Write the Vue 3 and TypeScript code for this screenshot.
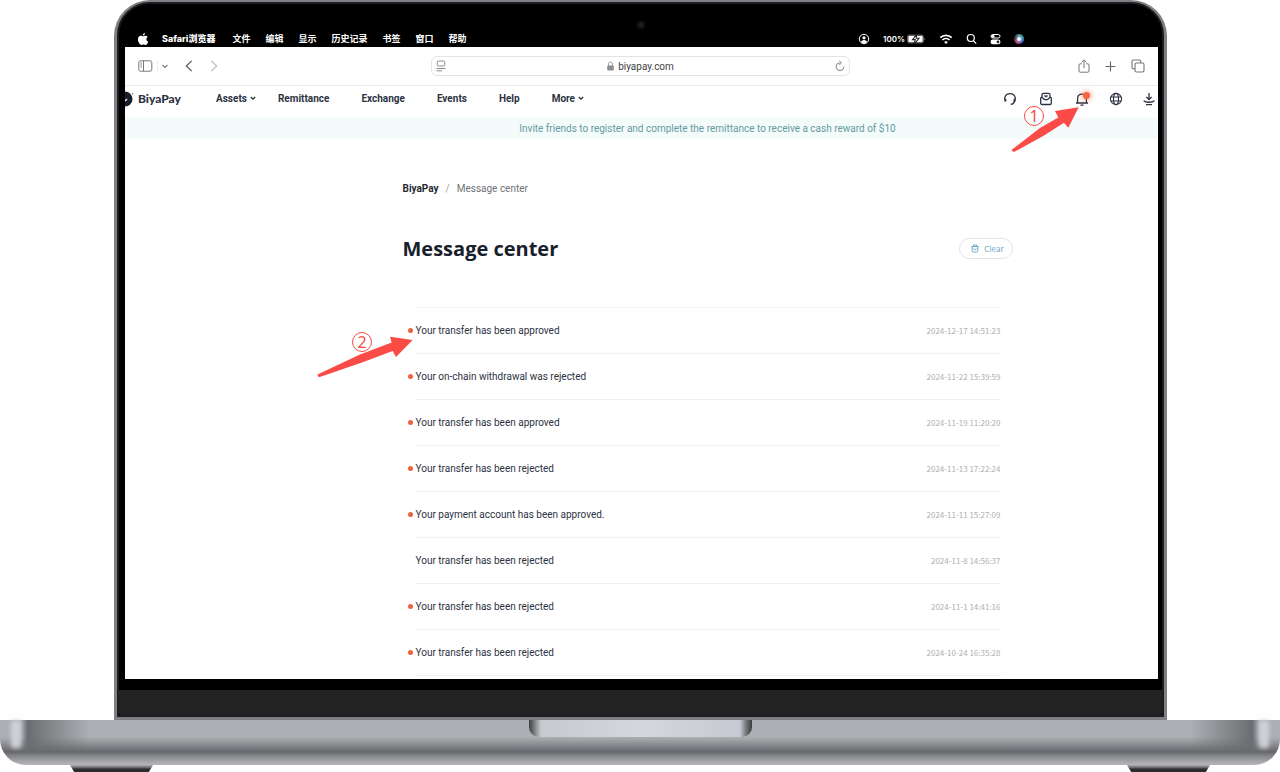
<script setup lang="ts">
interface Message {
  title: string
  time: string
  unread: boolean
}

interface NavItem {
  label: string
  menu?: boolean
}

const systemMenus: string[] = ['文件', '编辑', '显示', '历史记录', '书签', '窗口', '帮助']

const navItems: NavItem[] = [
  { label: 'Assets', menu: true },
  { label: 'Remittance' },
  { label: 'Exchange' },
  { label: 'Events' },
  { label: 'Help' },
  { label: 'More', menu: true },
]

const messages: Message[] = [
  { title: 'Your transfer has been approved', time: '2024-12-17 14:51:23', unread: true },
  { title: 'Your on-chain withdrawal was rejected', time: '2024-11-22 15:39:59', unread: true },
  { title: 'Your transfer has been approved', time: '2024-11-19 11:20:20', unread: true },
  { title: 'Your transfer has been rejected', time: '2024-11-13 17:22:24', unread: true },
  { title: 'Your payment account has been approved.', time: '2024-11-11 15:27:09', unread: true },
  { title: 'Your transfer has been rejected', time: '2024-11-8 14:56:37', unread: false },
  { title: 'Your transfer has been rejected', time: '2024-11-1 14:41:16', unread: true },
  { title: 'Your transfer has been rejected', time: '2024-10-24 16:35:28', unread: true },
]
</script>

<template>
  <div class="laptop">
    <div class="lid">
      <div class="bezel">
        <span class="camera"></span>
        <div class="system-bar">
          <div class="system-left">
            <svg class="apple" width="12" height="14" viewBox="0 0 12 14" fill="#fff" aria-hidden="true">
              <path d="M8 1C8 2.300 7 3.400 5.800 3.400 5.700 2.200 6.700 1.100 8 1zM8.200 3.700c.8 0 1.900.4 2.500 1.300-2 1.200-1.600 3.900.5 4.700C10.600 11.300 9.600 13 8.500 13c-.8 0-1.200-.5-2.100-.5S5.100 13 4.400 13C2.900 13 .9 10 .9 7.300.9 5 2.300 3.700 3.900 3.700c.9 0 1.700.6 2.300.6s1.200-.6 2-.6z" />
            </svg>
            <strong class="app-name">Safari浏览器</strong>
            <span v-for="menu in systemMenus" :key="menu">{{ menu }}</span>
          </div>
          <div class="system-right">
            <svg width="12" height="12" viewBox="0 0 12 12" fill="none" stroke="#fff" aria-hidden="true">
              <circle cx="6" cy="6" r="4.700" />
              <circle cx="6" cy="4.800" r="1.600" fill="#fff" stroke="none" />
              <path d="M2.900 9c.8-2.800 5.400-2.800 6.200 0-1.400 1.700-4.800 1.700-6.200 0z" fill="#fff" stroke="none" />
            </svg>
            <span class="battery">100%
              <svg width="19" height="10" viewBox="0 0 19 10" aria-hidden="true">
                <rect x="0.500" y="1" width="16" height="8" rx="2" fill="#555" stroke="#888" stroke-width=".6" />
                <rect x="1.500" y="2" width="14" height="6" rx="1" fill="#fff" />
                <path d="M10 0 5.500 5.600h2.700L7.300 10 12 4.300H9.200z" fill="#fff" stroke="#222" stroke-width="1.100" />
                <path d="M17.500 3.800c1 .3 1 2 0 2.400z" fill="#888" />
              </svg>
            </span>
            <svg width="14" height="12" viewBox="0 0 14 12" fill="none" stroke="#fff" stroke-width="1.700" aria-hidden="true">
              <path d="M1.300 4.700c3.200-3.200 8.200-3.200 11.400 0M3.400 7c2-2 5.200-2 7.200 0" />
              <path d="M5.100 8.900c1.100-1 2.700-1 3.800 0L7 10.900z" fill="#fff" stroke="none" />
            </svg>
            <svg width="11" height="12" viewBox="0 0 11 12" fill="none" stroke="#fff" stroke-width="1.200" aria-hidden="true">
              <circle cx="4.800" cy="5" r="3.500" />
              <path d="m7.400 7.600 2.800 3" />
            </svg>
            <svg width="11" height="12" viewBox="0 0 11 12" aria-hidden="true">
              <rect x="1" y="1.500" width="9" height="3.500" rx="1.750" fill="none" stroke="#fff" />
              <circle cx="3" cy="3.250" r="1.500" fill="#fff" />
              <rect x=".5" y="6.500" width="10" height="4.800" rx="2.400" fill="#fff" />
              <circle cx="8" cy="8.900" r="1.300" fill="#222" />
            </svg>
            <span class="siri"></span>
          </div>
        </div>

        <div class="screen">
          <div class="toolbar">
            <div class="toolbar-left">
              <button type="button" aria-label="Sidebar">
                <svg width="15" height="12" viewBox="0 0 15 12" fill="none" stroke="#777" aria-hidden="true">
                  <rect x=".8" y=".8" width="13" height="10.400" rx="1.800" />
                  <path d="M5.500 1v10M2.400 3h1.500M2.400 5h1.500M2.400 7h1.500" />
                </svg>
              </button>
              <span class="divider"></span>
              <button type="button" aria-label="Tab groups" class="caret">
                <svg width="6" height="5" viewBox="0 0 6 5" fill="none" stroke="#777" stroke-width="1.100" aria-hidden="true"><path d="m.6 1 2.400 2.500L5.400 1" /></svg>
              </button>
              <button type="button" aria-label="Back" class="back">
                <svg width="8" height="12" viewBox="0 0 8 12" fill="none" stroke="#555" stroke-width="1.200" aria-hidden="true"><path d="M6.700.9 1.300 6l5.400 5.100" /></svg>
              </button>
              <button type="button" aria-label="Forward">
                <svg width="8" height="12" viewBox="0 0 8 12" fill="none" stroke="#bbb" stroke-width="1.200" aria-hidden="true"><path d="M1.300.9 6.700 6l-5.400 5.100" /></svg>
              </button>
            </div>
            <div class="address">
              <svg width="10" height="12" viewBox="0 0 10 12" fill="none" stroke="#8a8a8a" aria-hidden="true">
                <rect x="1.300" y="1" width="7.400" height="5" rx="1.200" />
                <path d="M.6 8.500h8.800M.6 10.800h5.600" />
              </svg>
              <a class="url" href="#">
                <svg width="7" height="10" viewBox="0 0 7 10" aria-hidden="true">
                  <path d="M1.600 5V2.900c0-2.600 3.800-2.600 3.800 0V5" fill="none" stroke="#999" />
                  <rect x=".2" y="4.500" width="6.600" height="5" rx=".9" fill="#8e8e8e" />
                </svg>
                biyapay.com
              </a>
              <button type="button" aria-label="Reload">
                <svg width="10" height="12" viewBox="0 0 10 12" fill="none" stroke="#777" stroke-width=".9" aria-hidden="true">
                  <path d="M5 2.800a3.900 3.900 0 1 0 3.900 3.900M4.300.7l2.300 2.100-2.300 2" />
                </svg>
              </button>
            </div>
            <div class="toolbar-right">
              <button type="button" aria-label="Share">
                <svg width="12" height="14" viewBox="0 0 12 14" fill="none" stroke="#777" aria-hidden="true">
                  <path d="M3.800 4.800H2.200c-.7 0-1.200.5-1.200 1.200v6c0 .7.5 1.200 1.200 1.200h7.600c.7 0 1.200-.5 1.200-1.200V6c0-.7-.5-1.200-1.200-1.200H8.200M6 9.200V1M3.600 3.200 6 .9l2.400 2.300" />
                </svg>
              </button>
              <button type="button" aria-label="New tab">
                <svg width="11" height="11" viewBox="0 0 11 11" fill="none" stroke="#666" stroke-width="1.100" aria-hidden="true"><path d="M5.500.5v10M.5 5.500h10" /></svg>
              </button>
              <button type="button" aria-label="Tab overview">
                <svg width="14" height="14" viewBox="0 0 14 14" fill="none" stroke="#777" stroke-width="1.100" aria-hidden="true">
                  <rect x="4" y="4" width="9" height="9" rx="1.600" />
                  <path d="M4 9.800H2.400C1.600 9.800 1 9.200 1 8.400V2.500C1 1.600 1.600 1 2.500 1h5.800c.8 0 1.500.6 1.500 1.500V4" />
                </svg>
              </button>
            </div>
          </div>

          <header class="site-header">
            <a class="brand" href="#">
              <svg width="9" height="16" viewBox="0 0 9 16" aria-hidden="true">
                <circle cx="0" cy="8" r="7.500" fill="#181e2c" />
                <path d="M6.600 2.600 8.400 1.800 8 4z" fill="#7c8190" />
                <path d="M0 8.800 2.600 7.400 1.600 9.400 0 10.400z" fill="#fff" />
              </svg>
              BiyaPay
            </a>
            <nav class="nav">
              <a v-for="item in navItems" :key="item.label" href="#">
                {{ item.label }}
                <svg v-if="item.menu" width="6" height="5" viewBox="0 0 6 5" fill="none" stroke="#252b3a" stroke-width="1.200" aria-hidden="true"><path d="m.8 1 2.200 2.200L5.200 1" /></svg>
              </a>
            </nav>
            <div class="site-actions">
              <div class="account-actions">
                <button type="button" aria-label="Support">
                  <svg width="14" height="14" viewBox="0 0 14 14" fill="none" stroke="#2c3242" stroke-width="1.300" aria-hidden="true">
                    <path d="M2.200 8.500C.6 4.500 3.200 1.600 7 1.600s6.400 2.900 4.800 6.900c-.5 2-1.800 3.600-4 3.900" />
                    <path d="M2.400 7v2.600M11.600 7v2.600" stroke-width="1.900" />
                  </svg>
                </button>
                <button type="button" aria-label="Orders">
                  <svg width="14" height="14" viewBox="0 0 14 14" fill="none" stroke="#2c3242" stroke-width="1.300" aria-hidden="true">
                    <path d="M3 5.200V2.900c0-.9.600-1.500 1.500-1.500h5c.9 0 1.500.6 1.500 1.500v2.300" />
                    <path d="M1.700 6.200c0-.9 1.300-1.200 1.900-.4C4.600 7.200 5.500 7.800 7 7.800s2.400-.6 3.400-2c.6-.8 1.900-.5 1.900.4v5c0 .8-.5 1.300-1.300 1.300H3c-.8 0-1.300-.5-1.300-1.300z" />
                    <path d="M5.400 3.900 7 5.200l1.600-1.300z" stroke-width="1" />
                  </svg>
                </button>
                <button type="button" aria-label="Notifications" class="bell">
                  <svg width="14" height="14" viewBox="0 0 14 14" fill="none" stroke="#2c3242" stroke-width="1.300" aria-hidden="true">
                    <path d="M1 11h12M2.600 11V6.200c0-5.500 8.800-5.500 8.800 0V11M5.500 13.100h3" />
                  </svg>
                  <span class="alert"></span>
                </button>
              </div>
              <button type="button" aria-label="Language">
                <svg width="14" height="14" viewBox="0 0 14 14" fill="none" stroke="#2c3242" stroke-width="1.100" aria-hidden="true">
                  <circle cx="7" cy="7" r="5.600" />
                  <ellipse cx="7" cy="7" rx="2.500" ry="5.600" />
                  <path d="M1.800 5h10.400M1.800 9h10.400" />
                </svg>
              </button>
              <button type="button" aria-label="Download">
                <svg width="12" height="14" viewBox="0 0 12 14" fill="none" stroke="#2c3242" stroke-width="1.300" aria-hidden="true">
                  <path d="M6 1v6.300M3.300 4.900 6 7.500l2.700-2.600M.7 8.600c1.500 2.200 9.100 2.200 10.600 0M3 12.600h6" />
                </svg>
              </button>
            </div>
          </header>

          <p class="promo">Invite friends to register and complete the remittance to receive a cash reward of $10</p>

          <main class="page">
            <div class="content">
              <nav class="crumbs" aria-label="Breadcrumb">
                <a href="#">BiyaPay</a>
                <span class="slash">/</span>
                <span>Message center</span>
              </nav>
              <div class="heading">
                <h1>Message center</h1>
                <button type="button" class="clear">
                  <svg width="8" height="9" viewBox="0 0 8 9" fill="none" stroke="#6fabc4" aria-hidden="true">
                    <path d="M.3 2.500h7.400M2.500 2.300V1h3v1.300M1.200 2.600v4.200c0 .8.500 1.200 1.200 1.200h3.200c.7 0 1.200-.4 1.200-1.200V2.600M2.800 4.500v.6c.4.700 2 .7 2.400 0v-.6" />
                  </svg>
                  Clear
                </button>
              </div>
              <ul class="messages">
                <li v-for="message in messages" :key="message.time" :class="{ unread: message.unread }">
                  <a href="#">{{ message.title }}</a>
                  <time>{{ message.time }}</time>
                </li>
              </ul>
            </div>
          </main>

          <div class="step step-one">
            <span class="step-number">1</span>
            <svg width="70" height="50" viewBox="0 0 70 50" aria-hidden="true">
              <path d="M2 45.500 30 24 48.300 13.500 45 7 68.700 3.300 58.300 23.700 54 18.700 34 31.500 4.500 47.700C3 48.300 1.200 46.500 2 45.500z" fill="#fa4b46" />
            </svg>
          </div>
          <div class="step step-two">
            <span class="step-number">2</span>
            <svg width="100" height="46" viewBox="0 0 100 46" aria-hidden="true">
              <path d="M2 41.300 44 21.500 75.700 9.500 74 3.700 96.700 7 80 24 76.700 18 46 29.500 3.800 44C2.200 44.200 1 42.300 2 41.300z" fill="#fa4b46" />
            </svg>
          </div>
        </div>
        <div class="chin"></div>
      </div>
    </div>
    <div class="base">
      <span class="shine"></span>
      <span class="notch"></span>
      <span class="shine"></span>
    </div>
    <div class="feet">
      <span></span>
      <span></span>
    </div>
  </div>
</template>

<style>
body {
  margin: 0;
  background: #fff;
}
</style>

<style scoped>
.laptop {
  font-family: Roboto, "Noto Sans CJK SC", sans-serif;
  font-size: 10px;
  color: #2c3242;
  overflow: hidden;
}

a {
  color: inherit;
  text-decoration: none;
}

button {
  display: flex;
  align-items: center;
  padding: 0;
  border: 0;
  background: none;
  font: inherit;
  color: inherit;
}

svg {
  display: block;
  flex: none;
}

.lid {
  margin: 0 113px 0 114px;
  padding: 2px 3px 3px;
  background: #808084;
  border-radius: 36px 36px 0 0;
}

.bezel {
  position: relative;
  padding: 26px 4px 0 6px;
  background: #000;
  border: 2px solid #1d1d22;
  border-radius: 33px 33px 0 0;
}

.camera {
  position: absolute;
  top: 17px;
  left: 50%;
  width: 4px;
  height: 4px;
  margin-left: -4px;
  border: 2px solid #121214;
  border-radius: 50%;
  background: #1c2024;
}

.system-bar {
  display: flex;
  justify-content: space-between;
  align-items: center;
  height: 17px;
  padding: 0 134px 0 12px;
  color: #fff;
  font-family: Inter, "Noto Sans CJK SC", sans-serif;
  font-size: 9px;
  font-weight: 600;
}

.system-left {
  display: flex;
  align-items: center;
  gap: 15px;
}

.app-name {
  margin: 0 2px 0 -2px;
  font-weight: 800;
}

.system-right {
  display: flex;
  align-items: center;
  gap: 13px;
  font-size: 8px;
}

.battery {
  display: flex;
  align-items: center;
  gap: 2px;
}

.siri {
  width: 10px;
  height: 10px;
  border-radius: 50%;
  background: radial-gradient(circle, #fff 0 15%, transparent 45%), conic-gradient(#4a9a8a, #3b8fbe, #5060c8, #c04878, #333a60, #4a9a8a);
}

.screen {
  position: relative;
  overflow: hidden;
  background: #fff;
}

.toolbar {
  display: grid;
  grid-template-columns: 1fr 419px 1fr;
  align-items: center;
  height: 38px;
  padding: 0 13px 0 11px;
  border-bottom: 1px solid #ebebeb;
}

.toolbar-left,
.toolbar-right {
  display: flex;
  align-items: center;
}

.toolbar-left {
  padding-left: 2px;
}

.divider {
  width: 1px;
  height: 12px;
  margin: 0 4px;
  background: #eee;
}

.back {
  margin: 0 17px;
}

.toolbar-right {
  justify-content: flex-end;
  gap: 15px;
}

.address {
  display: flex;
  justify-content: space-between;
  align-items: center;
  box-sizing: border-box;
  height: 20px;
  padding: 0 4px;
  border: 1px solid #e3e3e3;
  border-radius: 6px;
}

.url {
  display: flex;
  align-items: center;
  gap: 4px;
  color: #444;
}

.site-header {
  display: flex;
  align-items: center;
  box-sizing: border-box;
  height: 32px;
  padding-right: 3px;
  padding-bottom: 7px;
}

.brand {
  display: flex;
  align-items: center;
  gap: 4px;
  width: 91px;
  font-family: Lato, sans-serif;
  font-size: 12px;
  font-weight: 900;
}

.nav {
  display: flex;
  gap: 32px;
  font-weight: 700;
}

.nav a {
  display: flex;
  align-items: center;
  gap: 3px;
}

.nav svg {
  margin-right: -10px;
}

.site-actions {
  display: flex;
  align-items: center;
  gap: 20px;
  margin-left: auto;
}

.account-actions {
  display: flex;
  gap: 22px;
}

.bell {
  position: relative;
}

.alert {
  position: absolute;
  top: 0;
  right: -1px;
  width: 7px;
  height: 7px;
  border-radius: 50%;
  background: #fa6340;
  box-shadow: 0 0 5px 2px #fa634066;
}

.promo {
  margin: 0;
  padding-left: 132px;
  background: #f4fbfb;
  color: #649aa0;
  line-height: 21px;
  text-align: center;
}

.page {
  padding: 41px 0 3px 132px;
}

.content {
  max-width: 610px;
  margin: 0 auto;
}

.crumbs {
  display: flex;
  gap: 7px;
  line-height: 18px;
  color: #707378;
}

.crumbs a {
  color: #252a32;
  font-weight: 700;
}

.slash {
  color: #a0a0a0;
}

.heading {
  display: flex;
  justify-content: space-between;
  align-items: center;
  height: 40px;
  margin: 30px 0 39px;
}

h1 {
  margin: 0;
  color: #17202b;
  font-family: "Open Sans", sans-serif;
  font-size: 20px;
  font-weight: 700;
}

.clear {
  gap: 5px;
  height: 21px;
  padding: 0 8px 0 11px;
  border: 1px solid #dfe2ea;
  border-radius: 11px;
  color: #6fabc4;
  font-family: "Noto Sans CJK SC", sans-serif;
  font-size: 8px;
}

.messages {
  margin: 0 12px 0 13px;
  padding: 0;
  list-style: none;
  border-top: 1px solid #f4f4f5;
}

.messages li {
  position: relative;
  display: flex;
  justify-content: space-between;
  align-items: center;
  box-sizing: border-box;
  height: 46px;
  border-bottom: 1px solid #f1f1f2;
}

.unread::before {
  content: "";
  position: absolute;
  left: -8px;
  width: 5px;
  height: 5px;
  border-radius: 50%;
  background: #f2613f;
}

.messages time {
  color: #adafb2;
  font-family: "Noto Sans CJK SC", sans-serif;
  font-size: 8px;
}

.step {
  position: absolute;
}

.step-one {
  top: 57px;
  right: 78px;
}

.step-two {
  top: 286px;
  left: 191px;
}

.step-number {
  position: absolute;
  top: 2px;
  left: 14px;
  box-sizing: border-box;
  width: 20px;
  height: 20px;
  border: 1px solid #fa4b46;
  border-radius: 50%;
  color: #fa4b46;
  font-family: "Noto Sans", sans-serif;
  font-size: 16px;
  line-height: 18px;
  text-align: center;
}

.step-two .step-number {
  top: -1px;
  left: 36px;
}

.chin {
  height: 25px;
  margin: 11px -4px 0 -6px;
  border-radius: 0 0 3px 3px;
  background: #232323;
}

.base {
  display: flex;
  justify-content: space-between;
  height: 45px;
  border-radius: 0 0 26px 26px;
  background:
    linear-gradient(90deg, transparent 20px, #6c6d71 28px, transparent 90px calc(100% - 90px), #6c6d71 calc(100% - 28px), transparent calc(100% - 20px)) top / 100% 31px no-repeat,
    linear-gradient(#aeafb4 0 17px, #97989c 22px, #66676c 32px, #85868a 36px, #a8a9ad 42px, #b4b5b9);
}

.shine {
  width: 10px;
  height: 28px;
  margin: 0 11px;
  border-radius: 3px;
  background: #d0d0d8;
  filter: blur(2px);
}

.notch {
  width: 223px;
  height: 17px;
  border-radius: 0 0 10px 10px;
  background: linear-gradient(90deg, #3b3c40, #77787c 5px, #c8c9ce 12px, #d6d7dc 50%, #c8c8d2 calc(100% - 12px), #77787c calc(100% - 6px), #3b3c40);
}

.feet {
  display: flex;
  justify-content: space-between;
  height: 7px;
  padding: 0 70px;
}

.feet span {
  width: 83px;
  clip-path: polygon(0 0, 100% 0, 95% 100%, 5% 100%);
  background: linear-gradient(#b0b0b2, #5c5d5f 3px, #2c2d2e 4px);
}
</style>
